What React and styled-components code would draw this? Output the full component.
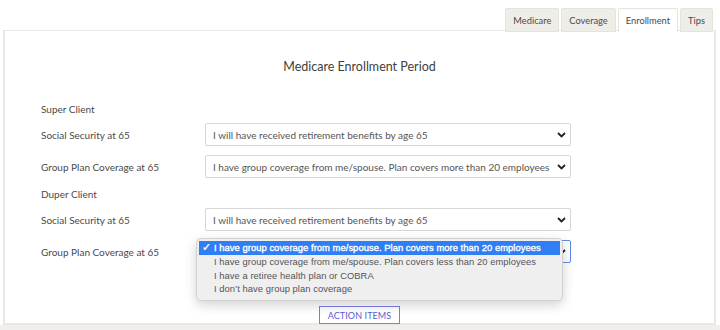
import styled, { createGlobalStyle } from "styled-components";

const Global = createGlobalStyle`
  body {
    margin: 0;
    background: #fff;
    font-family: Lato, "Open Sans", sans-serif;
  }
`;

const Page = styled.div`
  width: 720px;
  height: 330px;
  overflow: hidden;
  display: flex;
  flex-direction: column;
`;

const Tabs = styled.div`
  display: flex;
  justify-content: flex-end;
  gap: 2px;
  padding: 8px 7px 0 0;
  height: 31px;
  box-sizing: border-box;
`;

const Tab = styled.div`
  height: 24px;
  padding: 0 7px;
  display: flex;
  align-items: center;
  font-size: 9.3px;
  color: #4a4a4a;
  background: ${(p) => (p.$active ? "#fff" : "#efede8")};
  border: 1px solid #e6e3dc;
  border-bottom: ${(p) => (p.$active ? "1px solid #fff" : "1px solid #e6e3dc")};
  border-radius: 2px 2px 0 0;
  box-sizing: border-box;
  position: relative;
  z-index: 1;
`;

const Panel = styled.div`
  margin: -1px 4px 0 3px;
  border: 2px solid #ebe8e1;
  border-top-width: 1px;
  height: 295px;
  box-sizing: border-box;
  padding: 28px 0 0 36px;
  position: relative;
`;

const Title = styled.div`
  text-align: center;
  font-size: 12.5px;
  line-height: 16px;
  color: #3f3f3f;
  padding-right: 36px;
  margin-bottom: 27px;
`;

const Section = styled.div`
  font-size: 10px;
  line-height: 14px;
  color: #4a4a4a;
  margin-bottom: ${(p) => p.$gap}px;
`;

const Row = styled.div`
  display: flex;
  align-items: center;
  margin-bottom: 9px;
`;

const Label = styled.div`
  width: 164px;
  font-size: 10px;
  color: #4a4a4a;
`;

const SelectBox = styled.div`
  width: 366px;
  height: 23px;
  box-sizing: border-box;
  border: 1px solid ${(p) => (p.$focus ? "#5a8cf0" : "#d6d6d6")};
  border-radius: 2px;
  display: flex;
  align-items: center;
  justify-content: space-between;
  padding: 0 4px 0 7px;
  font-size: 10px;
  color: #555;
  background: #fff;
`;

const Chevron = () => (
  <svg width="9" height="6" viewBox="0 0 9 6">
    <path d="M1 1l3.5 3.5L8 1" fill="none" stroke="#222" strokeWidth="1.8" />
  </svg>
);

const SelectWrap = styled.div`
  position: relative;
`;

const Popup = styled.div`
  position: absolute;
  left: -9px;
  top: -2px;
  width: 367px;
  padding: 2px 2px 4px;
  box-sizing: border-box;
  background: #efefef;
  border: 1px solid #d2d2d2;
  border-radius: 5px;
  box-shadow: 0 4px 12px rgba(0, 0, 0, 0.18);
  font-family: "Liberation Sans", Arial, sans-serif;
  z-index: 5;
`;

const Option = styled.div`
  height: 13.7px;
  line-height: 11px;
  display: flex;
  align-items: center;
  white-space: nowrap;
  font-size: 9.4px;
  letter-spacing: 0.05px;
  padding-left: 15px;
  color: ${(p) => (p.$selected ? "#fff" : "#555")};
  background: ${(p) => (p.$selected ? "#2f7ef6" : "transparent")};
  -webkit-text-stroke: ${(p) => (p.$selected ? "0.35px #fff" : "0")};
  position: relative;
`;

const Check = styled.span`
  position: absolute;
  left: 3px;
  font-size: 11px;
`;

const ButtonRow = styled.div`
  display: flex;
  justify-content: center;
  padding-right: 36px;
  margin-top: 43px;
`;

const ActionButton = styled.button`
  height: 18px;
  padding: 0 8px;
  border: 1px solid #7c7de8;
  background: #fff;
  color: #5b5cd6;
  font-family: Lato, sans-serif;
  font-size: 9px;
  letter-spacing: 0.1px;
`;

const Footer = styled.div`
  flex: 1;
  background: #f1efeb;
`;

const ss = "I will have received retirement benefits by age 65";
const gp = "I have group coverage from me/spouse. Plan covers more than 20 employees";

const options = [
  gp,
  "I have group coverage from me/spouse. Plan covers less than 20 employees",
  "I have a retiree health plan or COBRA",
  "I don\u2019t have group plan coverage",
];

function Select({ value, focus, open }) {
  return (
    <SelectWrap>
      <SelectBox $focus={focus}>
        <span>{value}</span>
        <Chevron />
      </SelectBox>
      {open && (
        <Popup>
          {options.map((o, i) => (
            <Option key={o} $selected={i === 0}>
              {i === 0 && <Check>✓</Check>}
              {o}
            </Option>
          ))}
        </Popup>
      )}
    </SelectWrap>
  );
}

export default function App() {
  return (
    <Page>
      <Global />
      <Tabs>
        <Tab>Medicare</Tab>
        <Tab>Coverage</Tab>
        <Tab $active>Enrollment</Tab>
        <Tab>Tips</Tab>
      </Tabs>
      <Panel>
        <Title>Medicare Enrollment Period</Title>
        <Section $gap={7}>Super Client</Section>
        <Row>
          <Label>Social Security at 65</Label>
          <Select value={ss} />
        </Row>
        <Row>
          <Label>Group Plan Coverage at 65</Label>
          <Select value={gp} />
        </Row>
        <Section $gap={7}>Duper Client</Section>
        <Row>
          <Label>Social Security at 65</Label>
          <Select value={ss} />
        </Row>
        <Row>
          <Label>Group Plan Coverage at 65</Label>
          <Select value={gp} focus open />
        </Row>
        <ButtonRow>
          <ActionButton>ACTION ITEMS</ActionButton>
        </ButtonRow>
      </Panel>
      <Footer />
    </Page>
  );
}
